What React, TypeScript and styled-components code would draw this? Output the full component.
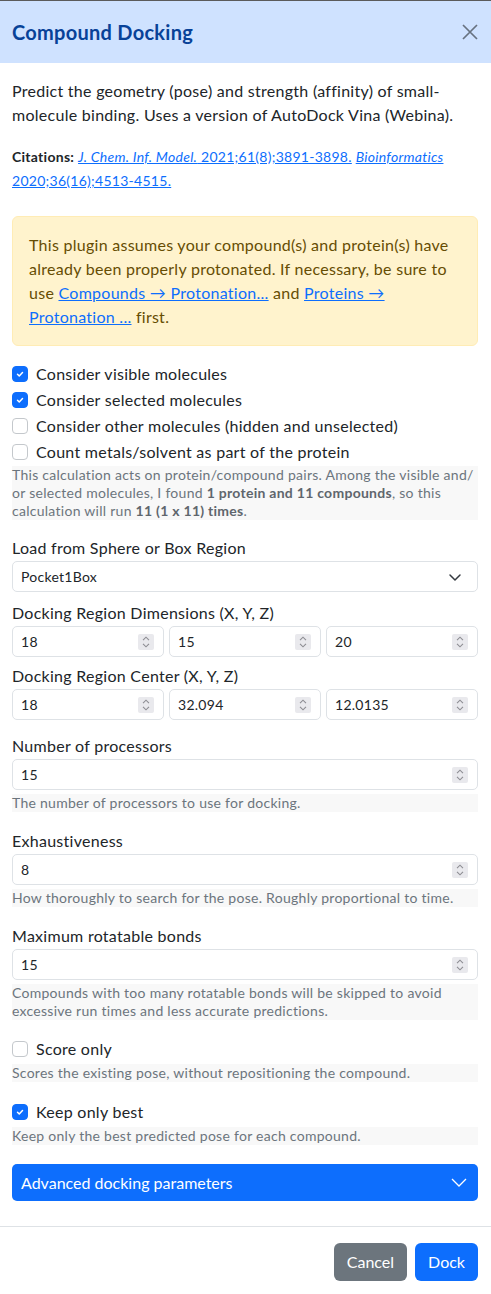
import React from 'react';
import styled, { createGlobalStyle } from 'styled-components';

const GlobalStyle = createGlobalStyle`
  html, body { margin: 0; padding: 0; background: #fff; }
  body {
    font-family: Lato, "Open Sans", "Liberation Sans", sans-serif;
    color: #212529;
    font-size: 16px;
    line-height: 1.5;
    letter-spacing: 0.017em;
  }
  *, *::before, *::after { box-sizing: border-box; }
`;

const Dialog = styled.div`
  width: 491px;
  border-top: 1px solid #5b5b5b;
  background: #fff;
`;

const Header = styled.header`
  display: flex;
  align-items: center;
  justify-content: space-between;
  padding: 16px 13px 16px 12px;
  background: #cfe2ff;
`;

const Title = styled.h1`
  margin: 0;
  font-size: 20px;
  line-height: 30px;
  font-weight: 700;
  color: #084298;
`;

const CloseButton = styled.button`
  display: flex;
  align-items: center;
  justify-content: center;
  width: 16px;
  height: 16px;
  padding: 0;
  border: 0;
  background: transparent;
  color: #687280;
  cursor: pointer;
`;

const Body = styled.div`
  padding: 16px 13px 25px 12px;
`;

const Description = styled.p`
  margin: 0 0 18px;
`;

const Citations = styled.p`
  margin: 0 0 23px;
  font-size: 14px;
  line-height: 24px;
  b { font-weight: 700; }
`;

const Link = styled.a`
  color: #0d6efd;
  text-decoration: underline;
`;

const Alert = styled.div`
  margin-bottom: 16px;
  padding: 16px;
  border: 1px solid #ffecb5;
  border-radius: 6px;
  background: #fff3cd;
  color: #664d03;
  line-height: 24px;
`;

const CheckRow = styled.label`
  display: flex;
  align-items: center;
  gap: 8px;
  min-height: 24px;
  margin-bottom: 2px;
  line-height: 24px;
`;

const CheckBox = styled.span<{ $checked?: boolean }>`
  display: flex;
  align-items: center;
  justify-content: center;
  flex: none;
  width: 16px;
  height: 16px;
  border-radius: 4px;
  border: 1px solid ${p => (p.$checked ? '#0d6efd' : '#c4c8cc')};
  background: ${p => (p.$checked ? '#0d6efd' : '#fff')};
`;

const Help = styled.div<{ $top?: number }>`
  margin-top: ${p => p.$top ?? 4}px;
  font-size: 14px;
  line-height: 18px;
  color: #6c757d;
  background: #f8f8f8;
  b { font-weight: 700; color: #5f666d; }
`;

const FieldLabel = styled.div<{ $top?: number }>`
  margin-top: ${p => p.$top ?? 16}px;
  margin-bottom: 1px;
  line-height: 24px;
`;

const Control = styled.div`
  display: flex;
  align-items: center;
  height: 31px;
  padding: 0 9px 0 8px;
  border: 1px solid #dee2e6;
  border-radius: 5px;
  background: #fff;
  font-size: 14px;
  color: #212529;
`;

const ControlValue = styled.span`
  flex: 1;
  white-space: nowrap;
  overflow: hidden;
`;

const Spinner = styled.span`
  display: flex;
  flex-direction: column;
  align-items: center;
  justify-content: center;
  gap: 2px;
  width: 16px;
  height: 16px;
  border-radius: 2px;
  background: #e9e9ed;
`;

const TripleRow = styled.div`
  display: grid;
  grid-template-columns: 1fr 1fr 1fr;
  gap: 5px;
`;

const CheckGroup = styled.div<{ $top?: number }>`
  margin-top: ${p => p.$top ?? 0}px;
`;

const AdvancedButton = styled.button`
  display: flex;
  align-items: center;
  justify-content: space-between;
  width: 100%;
  height: 37px;
  margin-top: 19px;
  padding: 0 11px 0 9px;
  border: 0;
  border-radius: 5px;
  background: #0d6efd;
  color: #fff;
  font: inherit;
  font-size: 16px;
  text-align: left;
`;

const Footer = styled.footer`
  display: flex;
  justify-content: flex-end;
  gap: 8px;
  padding: 16px 13px 16px 12px;
  border-top: 1px solid #dee2e6;
`;

const FooterButton = styled.button<{ $variant: 'secondary' | 'primary' }>`
  height: 38px;
  padding: 0 13px;
  border: 0;
  border-radius: 6px;
  background: ${p => (p.$variant === 'primary' ? '#0d6efd' : '#6c757d')};
  color: #fff;
  font: inherit;
  font-size: 16px;
`;

const CheckMark = () => (
  <svg width="10" height="10" viewBox="0 0 20 20" aria-hidden="true">
    <path d="M5 10.5l3.5 3.5L15 7" fill="none" stroke="#fff" strokeWidth="3" strokeLinecap="round" strokeLinejoin="round" />
  </svg>
);

const Check = ({ checked, children }: { checked?: boolean; children: React.ReactNode }) => (
  <CheckRow>
    <CheckBox $checked={checked}>{checked && <CheckMark />}</CheckBox>
    <span>{children}</span>
  </CheckRow>
);

const SpinIcon = () => (
  <Spinner>
    <svg width="8" height="5" viewBox="0 0 8 5" aria-hidden="true">
      <path d="M1 4.2L4 1.2L7 4.2" fill="none" stroke="#8d8d93" strokeWidth="1.1" />
    </svg>
    <svg width="8" height="5" viewBox="0 0 8 5" aria-hidden="true">
      <path d="M1 0.8L4 3.8L7 0.8" fill="none" stroke="#8d8d93" strokeWidth="1.1" />
    </svg>
  </Spinner>
);

const NumberField = ({ value }: { value: string }) => (
  <Control>
    <ControlValue>{value}</ControlValue>
    <SpinIcon />
  </Control>
);

const SelectField = ({ value }: { value: string }) => (
  <Control>
    <ControlValue>{value}</ControlValue>
    <svg width="14" height="10" viewBox="0 0 14 10" aria-hidden="true" style={{ marginRight: 6 }}>
      <path d="M2 3l5 5 5-5" fill="none" stroke="#343a40" strokeWidth="1.5" strokeLinecap="round" strokeLinejoin="round" />
    </svg>
  </Control>
);

export default function App() {
  return (
    <>
      <GlobalStyle />
      <Dialog>
        <Header>
          <Title>Compound Docking</Title>
          <CloseButton aria-label="Close">
            <svg width="16" height="16" viewBox="0 0 16 16" aria-hidden="true">
              <path d="M1 1L15 15M15 1L1 15" stroke="currentColor" strokeWidth="1.7" />
            </svg>
          </CloseButton>
        </Header>
        <Body>
          <Description>
            Predict the geometry (pose) and strength (affinity) of small-molecule binding. Uses a version of
            AutoDock Vina (Webina).
          </Description>
          <Citations>
            <b>Citations:</b>{' '}
            <Link href="#">
              <i>J. Chem. Inf. Model.</i> 2021;61(8);3891-3898.
            </Link>{' '}
            <Link href="#">
              <i>Bioinformatics</i> 2020;36(16);4513-4515.
            </Link>
          </Citations>
          <Alert>
            This plugin assumes your compound(s) and protein(s) have
            <br />
            already been properly protonated. If necessary, be sure to
            <br />
            use <Link href="#">Compounds → Protonation...</Link> and <Link href="#">Proteins →</Link>
            <br />
            <Link href="#">Protonation ...</Link> first.
          </Alert>
          <CheckGroup>
            <Check checked>Consider visible molecules</Check>
            <Check checked>Consider selected molecules</Check>
            <Check>Consider other molecules (hidden and unselected)</Check>
            <Check>Count metals/solvent as part of the protein</Check>
          </CheckGroup>
          <Help $top={1}>
            This calculation acts on protein/compound pairs. Among the visible and/
            <br />
            or selected molecules, I found <b>1 protein and 11 compounds</b>, so this
            <br />
            calculation will run <b>11 (1 x 11) times</b>.
          </Help>

          <FieldLabel>Load from Sphere or Box Region</FieldLabel>
          <SelectField value="Pocket1Box" />

          <FieldLabel $top={9}>Docking Region Dimensions (X, Y, Z)</FieldLabel>
          <TripleRow>
            <NumberField value="18" />
            <NumberField value="15" />
            <NumberField value="20" />
          </TripleRow>

          <FieldLabel $top={7}>Docking Region Center (X, Y, Z)</FieldLabel>
          <TripleRow>
            <NumberField value="18" />
            <NumberField value="32.094" />
            <NumberField value="12.0135" />
          </TripleRow>

          <FieldLabel $top={14}>Number of processors</FieldLabel>
          <NumberField value="15" />
          <Help>The number of processors to use for docking.</Help>

          <FieldLabel $top={17}>Exhaustiveness</FieldLabel>
          <NumberField value="8" />
          <Help>How thoroughly to search for the pose. Roughly proportional to time.</Help>

          <FieldLabel $top={17}>Maximum rotatable bonds</FieldLabel>
          <NumberField value="15" />
          <Help>
            Compounds with too many rotatable bonds will be skipped to avoid
            <br />
            excessive run times and less accurate predictions.
          </Help>

          <CheckGroup $top={17}>
            <Check>Score only</Check>
          </CheckGroup>
          <Help $top={3}>Scores the existing pose, without repositioning the compound.</Help>

          <CheckGroup $top={18}>
            <Check checked>Keep only best</Check>
          </CheckGroup>
          <Help $top={3}>Keep only the best predicted pose for each compound.</Help>

          <AdvancedButton>
            <span>Advanced docking parameters</span>
            <svg width="16" height="9" viewBox="0 0 16 9" aria-hidden="true">
              <path d="M1 1l7 7 7-7" fill="none" stroke="#fff" strokeWidth="1.3" />
            </svg>
          </AdvancedButton>
        </Body>
        <Footer>
          <FooterButton $variant="secondary">Cancel</FooterButton>
          <FooterButton $variant="primary">Dock</FooterButton>
        </Footer>
      </Dialog>
    </>
  );
}
